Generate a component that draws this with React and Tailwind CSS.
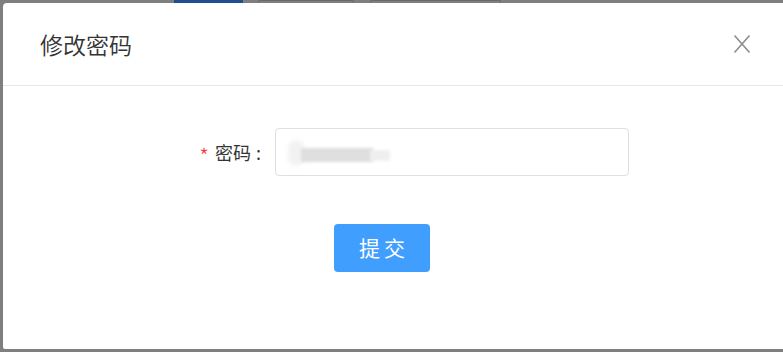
const font = { fontFamily: '"Noto Sans CJK SC", "Noto Sans", sans-serif' };

const CloseIcon = () => (
  <svg width="18" height="20" viewBox="0 0 18 20" className="text-[#8c8c8c]">
    <path d="M1.5 1.5 L16.5 18.5 M16.5 1.5 L1.5 18.5" stroke="currentColor" strokeWidth="1.6" fill="none" />
  </svg>
);

const App = () => {
  return (
    <div className="w-[783px] h-[352px] bg-[#7f7f7f] overflow-hidden flex flex-col" style={font}>
      {/* page behind the overlay, only the top edge shows */}
      <div className="h-[3px] flex shrink-0">
        <div className="w-[174px]" />
        <div className="w-[69px] bg-[#1f4f8f]" />
        <div className="w-[15px]" />
        <div className="w-[96px] border-t border-x border-[#6a6a6a] rounded-t-[2px]" />
        <div className="w-[16px]" />
        <div className="w-[131px] border-t border-x border-[#6a6a6a] rounded-t-[2px]" />
      </div>

      <div className="flex flex-1 min-h-0">
        <div className="w-[3px] shrink-0" />
        {/* modal */}
        <div className="flex-1 bg-white rounded-tl-[4px] rounded-bl-[2px] flex flex-col h-[346px]">
          <div className="h-[83px] shrink-0 flex items-center justify-between pl-[37px] pr-[32px] border-b border-[#e6e6e6]">
            <span className="text-[23px] text-[#333] leading-none font-[350]">修改密码</span>
            <CloseIcon />
          </div>

          <div className="flex items-center mt-[42px] pl-[188px]">
            <div className="w-[84px] flex items-center justify-end pr-[14px] text-[18px] text-[#333]">
              <span className="text-[#f23c3c] text-[22px] mr-[6px] mt-[6px] leading-none font-light">*</span>
              <span>密码</span>
              <span className="ml-[5px]">:</span>
            </div>
            <div className="w-[354px] h-[48px] border border-[#dcdfe6] rounded-[4px] relative">
              <div className="absolute left-[12px] top-[11px] w-[16px] h-[26px] rounded-full bg-[#f2f2f2] blur-[2px]" />
              <div className="absolute left-[25px] top-[19px] w-[72px] h-[14px] bg-[#dedede] blur-[1.5px]" />
              <div className="absolute left-[94px] top-[21px] w-[20px] h-[11px] bg-[#efefef] blur-[1.5px]" />
            </div>
          </div>

          <div className="mt-[48px] pl-[331px]">
            <button className="w-[96px] h-[48px] bg-[#409eff] rounded-[4px] text-white text-[21px] tracking-[4px] pl-[4px]">
              提交
            </button>
          </div>
        </div>
      </div>

      <div className="h-[3px] shrink-0" />
    </div>
  );
};

export default App;
